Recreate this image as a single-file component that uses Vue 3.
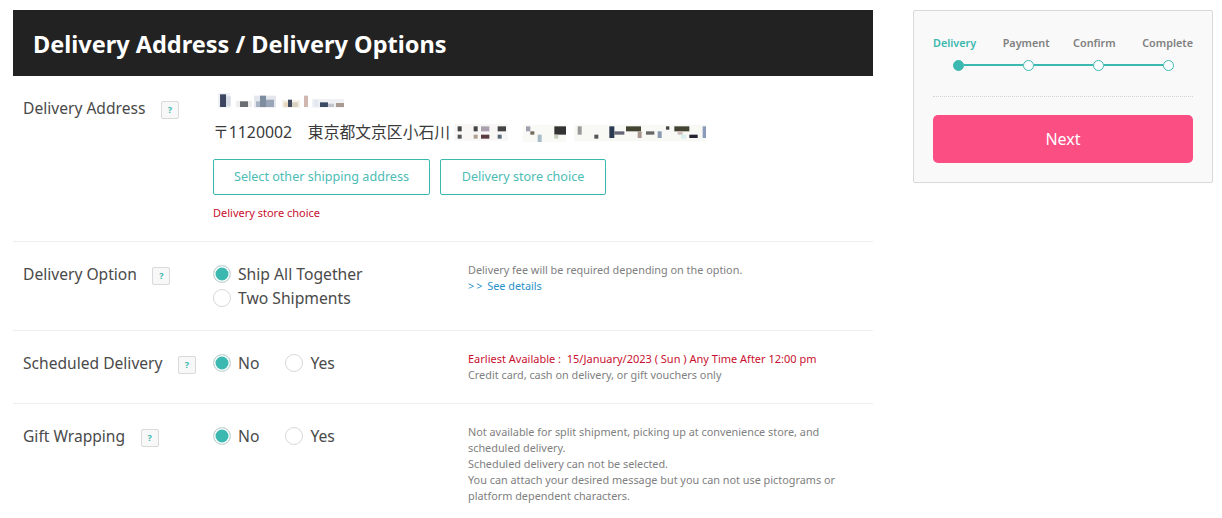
<script setup>
const nameBlocks = [
  [54, 20, 36, 44, '#eef0f4'], [60, 24, 18, 38, '#3c4560'], [78, 30, 14, 30, '#d8dce4'], [108, 44, 48, 18, '#eeeeee'], [120, 45, 24, 17, '#6a6d72'], [162, 28, 66, 36, '#e4e8ee'], [168, 45, 12, 17, '#a8b4c4'],
  [180, 28, 18, 34, '#7e8ca0'], [198, 40, 24, 22, '#9aa6b8'], [246, 42, 54, 22, '#f4eee4'], [252, 48, 12, 14, '#e8d8c0'], [264, 40, 12, 22, '#444c60'],
  [276, 48, 18, 14, '#d8d0c0'], [312, 28, 12, 34, '#d0b8b0'], [336, 38, 96, 26, '#f0f1f4'], [342, 40, 12, 22, '#e4e8f0'], [360, 48, 24, 14, '#3a4a60'],
  [384, 52, 18, 10, '#c0c4cc'], [408, 50, 24, 12, '#a89a90']
]
const addressBlocks = [
  [50, 118, 160, 50, '#f8f7f6'], [255, 120, 130, 52, '#f9f9f5'], [410, 120, 395, 50, '#f8f8f5'],
  [60, 125, 12, 15, '#444444'], [60, 150, 12, 12, '#555555'], [108, 125, 12, 15, '#444444'], [108, 150, 12, 12, '#b0a090'],
  [130, 125, 25, 15, '#aaa0b0'], [130, 150, 25, 12, '#5a3a40'], [180, 125, 25, 15, '#444444'], [180, 150, 12, 12, '#5a6a78'],
  [265, 125, 13, 15, '#a0a0b0'], [278, 140, 12, 10, '#706a58'], [300, 150, 12, 22, '#a8bcc8'], [350, 125, 35, 25, '#333333'],
  [350, 150, 12, 12, '#c8d0c0'], [420, 125, 12, 25, '#999999'], [470, 150, 12, 12, '#555555'], [515, 125, 15, 35, '#2a3a50'],
  [530, 140, 30, 10, '#666677'], [565, 125, 45, 15, '#444433'], [600, 140, 12, 20, '#a89890'], [625, 140, 25, 10, '#666666'],
  [660, 140, 12, 20, '#8a9ab0'], [685, 125, 10, 10, '#444444'], [710, 125, 45, 15, '#444433'], [720, 140, 15, 10, '#ccbbbb'],
  [755, 150, 25, 10, '#222233'], [730, 150, 15, 12, '#d8f0f0'], [795, 125, 10, 35, '#8a9ab8']
]
const steps = ['Delivery', 'Payment', 'Confirm', 'Complete']
</script>

<template>
  <div class="page">
    <main class="main">
      <h1 class="title">Delivery Address / Delivery Options</h1>

      <section class="row row-address">
        <div class="label">Delivery Address<span class="help">?</span></div>
        <div class="address">
          <svg class="mosaic-name" viewBox="48 20 390 44" aria-hidden="true">
            <rect v-for="(b, i) in nameBlocks" :key="i" :x="b[0]" :y="b[1]" :width="b[2]" :height="b[3]" :fill="b[4]" />
          </svg>
          <div class="postal">〒1120002　東京都文京区小石川 <svg class="mosaic-address" viewBox="50 115 760 60" aria-hidden="true">
            <rect v-for="(b, i) in addressBlocks" :key="i" :x="b[0]" :y="b[1]" :width="b[2]" :height="b[3]" :fill="b[4]" />
          </svg></div>
          <div class="buttons">
            <button class="outline wide">Select other shipping address</button>
            <button class="outline">Delivery store choice</button>
          </div>
          <p class="error">Delivery store choice</p>
        </div>
      </section>

      <section class="row row-option">
        <div class="label">Delivery Option<span class="help">?</span></div>
        <div class="choices stacked">
          <label class="radio"><span class="mark on"></span>Ship All Together</label>
          <label class="radio"><span class="mark"></span>Two Shipments</label>
        </div>
        <div class="note">
          Delivery fee will be required depending on the option.<br />
          <a class="link"><span class="arrows">&gt;&gt;</span> See details</a>
        </div>
      </section>

      <section class="row row-scheduled">
        <div class="label">Scheduled Delivery<span class="help">?</span></div>
        <div class="choices">
          <label class="radio"><span class="mark on"></span>No</label>
          <label class="radio"><span class="mark"></span>Yes</label>
        </div>
        <div class="note">
          <span class="red">Earliest Available :&nbsp; 15/January/2023 ( Sun ) Any Time After 12:00 pm</span><br />
          Credit card, cash on delivery, or gift vouchers only
        </div>
      </section>

      <section class="row row-gift">
        <div class="label">Gift Wrapping<span class="help">?</span></div>
        <div class="choices">
          <label class="radio"><span class="mark on"></span>No</label>
          <label class="radio"><span class="mark"></span>Yes</label>
        </div>
        <div class="note">
          Not available for split shipment, picking up at convenience store, and scheduled delivery.<br />
          Scheduled delivery can not be selected.<br />
          You can attach your desired message but you can not use pictograms or platform dependent characters.
        </div>
      </section>
    </main>

    <aside class="side">
      <div class="step-labels">
        <span v-for="(s, i) in steps" :key="s" :class="{ active: i === 0 }">{{ s }}</span>
      </div>
      <div class="track">
        <span class="dot on"></span><span class="line"></span>
        <span class="dot"></span><span class="line"></span>
        <span class="dot"></span><span class="line"></span>
        <span class="dot"></span>
      </div>
      <div class="divider"></div>
      <button class="next">Next</button>
    </aside>
  </div>
</template>

<style>
html, body { margin: 0; background: #fff; }
</style>

<style scoped>
.page {
  display: flex;
  align-items: flex-start;
  gap: 40px;
  padding: 10px 0 0 13px;
  width: 1222px;
  height: 518px;
  box-sizing: border-box;
  overflow: hidden;
  font-family: "Noto Sans", "Noto Sans CJK JP", sans-serif;
  color: #333;
}
.main { width: 860px; flex: none; }
.title {
  margin: 0;
  height: 66px;
  padding-left: 20px;
  background: #222;
  color: #fff;
  font-size: 23.5px;
  font-weight: 700;
  line-height: 68px;
}
.row {
  display: flex;
  border-bottom: 1px solid #eee;
  padding-left: 10px;
  box-sizing: border-box;
}
.row-address { height: 166px; padding-top: 20px; }
.row-option { height: 89px; padding-top: 20px; }
.row-scheduled { height: 73px; padding-top: 20px; }
.row-gift { border-bottom: 0; padding-top: 20px; }
.label {
  width: 190px;
  flex: none;
  font-size: 15.6px;
  line-height: 24px;
  color: #4a4a4a;
  white-space: nowrap;
}
.help {
  display: inline-block;
  width: 18px;
  height: 18px;
  margin-left: 15.5px;
  box-sizing: border-box;
  border: 1px solid #d9d9d9;
  border-radius: 2px;
  background: #f8f8f8;
  color: #3bb8b0;
  font-size: 9px;
  font-weight: 700;
  line-height: 16px;
  text-align: center;
  vertical-align: 1px;
}
.address { flex: 1; }
.mosaic-name { display: block; width: 130px; height: 14.67px; margin: -3px 0 0 3px; filter: blur(0.5px); }
.postal {
  margin-top: 12px;
  height: 24px;
  font-size: 15.8px;
  line-height: 24px;
  white-space: nowrap;
  color: #3a3a3a;
}
.mosaic-address { width: 258px; height: 20px; vertical-align: -5px; margin-left: -2px; filter: blur(0.4px); }
.buttons { display: flex; gap: 10px; margin-top: 15px; }
.outline {
  width: 166px;
  height: 36px;
  padding: 0;
  border: 1px solid #3bb8b0;
  border-radius: 2px;
  background: #fff;
  color: #4cbcb5;
  font: 12.6px "Noto Sans", sans-serif;
}
.wide { width: 217px; }
.error {
  margin: 10px 0 0;
  font-size: 11px;
  line-height: 16px;
  color: #c8102e;
}
.choices {
  width: 255px;
  flex: none;
  display: flex;
  align-items: flex-start;
  gap: 26px;
}
.stacked { flex-direction: column; gap: 0; }
.radio {
  display: flex;
  align-items: center;
  gap: 7px;
  font-size: 15.7px;
  line-height: 24px;
  color: #4a4a4a;
}
.mark {
  width: 18px;
  height: 18px;
  box-sizing: border-box;
  border: 1px solid #d8d8d8;
  border-radius: 50%;
  background: #fff;
  flex: none;
}
.mark.on {
  background: #3bb8b0;
  box-shadow: inset 0 0 0 1.5px #fff;
}
.note {
  flex: 1;
  padding-right: 30px;
  font-size: 10.85px;
  line-height: 16px;
  color: #808080;
}
.link { color: #2a90c8; }
.arrows { letter-spacing: 2px; }
.red { color: #c8102e; font-size: 11px; }
.side {
  width: 300px;
  height: 173px;
  flex: none;
  box-sizing: border-box;
  padding: 24px 19px 0;
  background: #f9f9f9;
  border: 1px solid #d9d9d9;
  border-radius: 2px;
}
.step-labels {
  display: flex;
  justify-content: space-between;
  font-size: 10.8px;
  font-weight: 600;
  line-height: 16px;
  color: #808080;
}
.step-labels span:nth-child(2) { margin-left: 3px; }
.step-labels span:nth-child(3) { margin-right: 3px; }
.step-labels .active { color: #3bb8b0; }
.track {
  display: flex;
  align-items: center;
  height: 12px;
  margin: 8px 19px 0 20px;
}
.dot {
  width: 11px;
  height: 11px;
  box-sizing: border-box;
  border: 1px solid #3bb8b0;
  border-radius: 50%;
  background: #fff;
  flex: none;
}
.dot.on { background: #3bb8b0; }
.line { flex: 1; height: 2px; background: #3bb8b0; }
.divider { margin-top: 25px; border-top: 1px dotted #d4d4d4; }
.next {
  display: block;
  width: 100%;
  height: 48px;
  margin-top: 18px;
  border: 0;
  border-radius: 5px;
  background: #fb4e83;
  color: #fff;
  font: 16px "Noto Sans", sans-serif;
}
</style>
